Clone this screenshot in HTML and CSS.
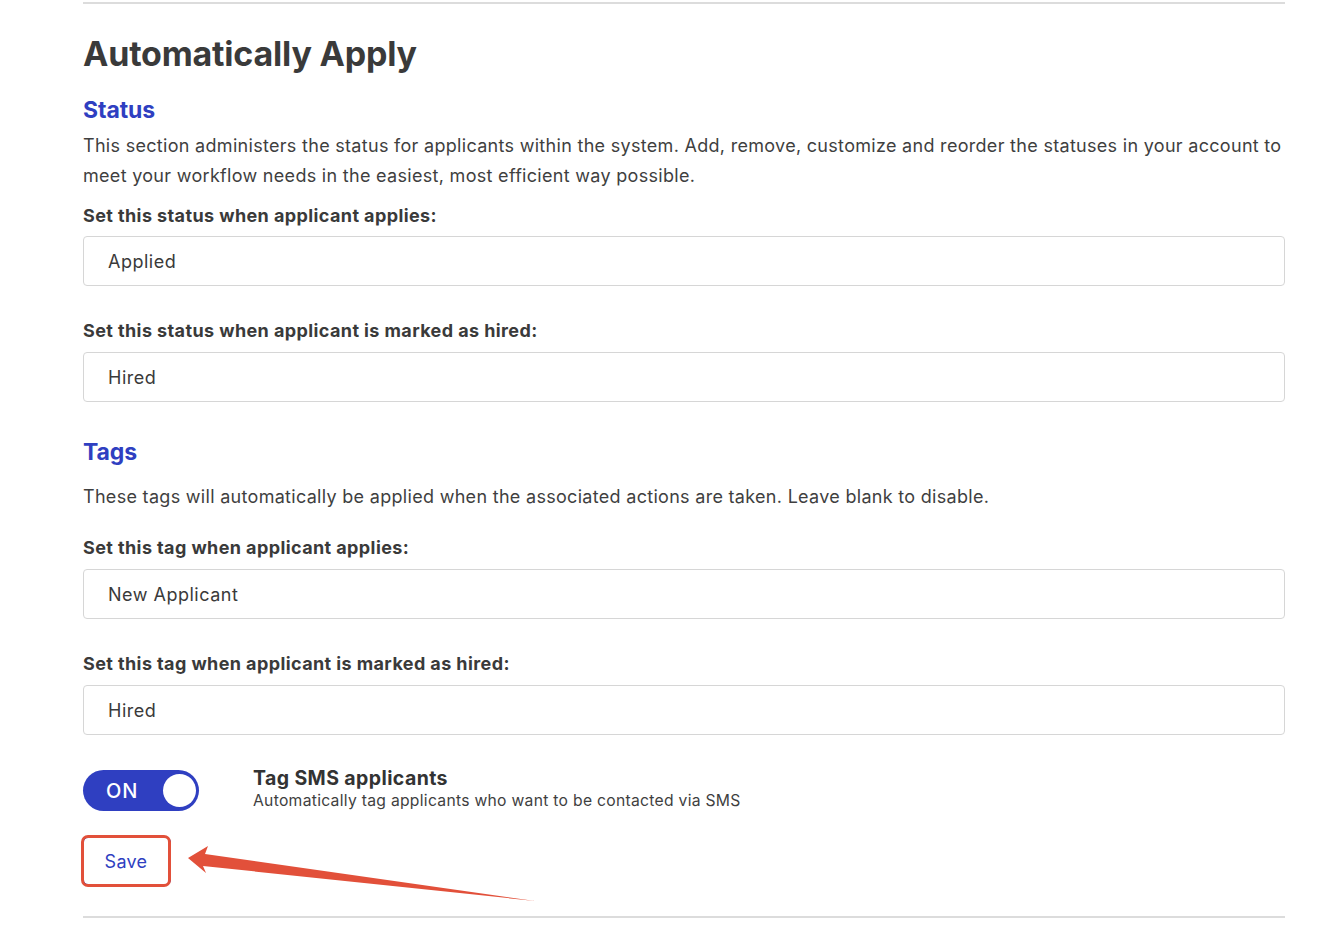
FILE: index.html
```html
<!DOCTYPE html>
<html>
<head>
<meta charset="utf-8">
<link rel="stylesheet" href="styles.css">
</head>
<body>
<div class="page">
  <div class="rule top"></div>
  <h1 class="title">Automatically Apply</h1>

  <h2 class="section">Status</h2>
  <p class="desc">This section administers the status for applicants within the system. Add, remove, customize and reorder the statuses in your account to meet your workflow needs in the easiest, most efficient way possible.</p>
  <div class="label first">Set this status when applicant applies:</div>
  <div class="field f1">Applied</div>
  <div class="label">Set this status when applicant is marked as hired:</div>
  <div class="field">Hired</div>

  <h2 class="section tags">Tags</h2>
  <p class="desc tagdesc">These tags will automatically be applied when the associated actions are taken. Leave blank to disable.</p>
  <div class="label first2">Set this tag when applicant applies:</div>
  <div class="field">New Applicant</div>
  <div class="label">Set this tag when applicant is marked as hired:</div>
  <div class="field">Hired</div>

  <div class="toggle-row">
    <div class="toggle"><span class="on">ON</span><span class="knob"></span></div>
    <div class="toggle-text">
      <div class="toggle-title">Tag SMS applicants</div>
      <div class="toggle-sub">Automatically tag applicants who want to be contacted via SMS</div>
    </div>
  </div>

  <div class="save-wrap">
    <button class="save">Save</button>
    <div class="highlight"></div>
  </div>

  <div class="rule bottom"></div>
</div>
<svg class="arrow" width="1333" height="937" viewBox="0 0 1333 937">
  <polygon points="188,858 208,846 205,854 535,901 203,866 206,873" fill="#e2503a"/>
</svg>
</body>
</html>
```
FILE: styles.css
```css
html, body {
  margin: 0;
  padding: 0;
  background: #fff;
}
body {
  font-family: Inter, "Open Sans", sans-serif;
  color: #3a3a3a;
  position: relative;
  width: 1333px;
  height: 937px;
  overflow: hidden;
}
.page {
  margin-left: 83px;
  width: 1202px;
  display: flex;
  flex-direction: column;
}
.rule {
  border-top: 2px solid #dcdcdc;
  height: 0;
}
.rule.top { margin-top: 2px; }
.rule.bottom { margin-top: 31px; }
.title {
  margin: 28px 0 0 0;
  font-size: 34px;
  line-height: 44px;
  font-weight: 700;
  color: #3a3a3a;
  letter-spacing: -0.2px;
}
.section {
  margin: 19px 0 0 0;
  font-size: 23px;
  line-height: 30px;
  font-weight: 700;
  color: #2f3fc1;
  letter-spacing: -0.1px;
}
.section.tags { margin-top: 35px; }
.desc {
  margin: 6px 0 0 0;
  font-size: 18px;
  line-height: 30px;
  color: #3f3f3f;
  letter-spacing: 0.3px;
}
.desc.tagdesc { margin-top: 15px; }
.label {
  margin-top: 33px;
  font-size: 18px;
  line-height: 24px;
  font-weight: 700;
  color: #3a3a3a;
  letter-spacing: 0.4px;
}
.label.first { margin-top: 13px; }
.label.first2 { margin-top: 24px; }
.field {
  margin-top: 9px;
  height: 48px;
  border: 1px solid #d6d6d6;
  border-radius: 4px;
  padding-left: 24px;
  display: flex;
  align-items: center;
  font-size: 18px;
  color: #3a3a3a;
  letter-spacing: 0.5px;
}
.field.f1 { margin-top: 8px; }
.toggle-row {
  margin-top: 31px;
  display: flex;
  align-items: flex-start;
  gap: 54px;
}
.toggle {
  margin-top: 4px;
  width: 116px;
  height: 41px;
  border-radius: 21px;
  background: #2f3fc1;
  display: flex;
  align-items: center;
  justify-content: space-between;
  padding: 0 3px 0 23px;
  box-sizing: border-box;
}
.on {
  color: #fff;
  font-size: 20px;
  font-weight: 500;
  letter-spacing: 1px;
}
.knob {
  width: 33px;
  height: 33px;
  border-radius: 50%;
  background: #fff;
}
.toggle-text {
  display: flex;
  flex-direction: column;
}
.toggle-title {
  font-size: 19.5px;
  line-height: 24px;
  font-weight: 700;
  color: #333;
  letter-spacing: 0.4px;
}
.toggle-sub {
  font-size: 15.7px;
  line-height: 22px;
  color: #3f3f3f;
  letter-spacing: 0.28px;
}
.save-wrap {
  margin-top: 25px;
  position: relative;
  width: 88px;
  height: 48px;
}
.save {
  width: 88px;
  height: 48px;
  border: 1px solid #2f3fc1;
  border-radius: 5px;
  background: #fff;
  color: #2f3fc1;
  font-family: Inter, "Open Sans", sans-serif;
  font-size: 18px;
  letter-spacing: 0.3px;
  padding: 0 2px 0 0;
}
.highlight {
  position: absolute;
  left: -2px;
  top: -2px;
  width: 84px;
  height: 46px;
  border: 3px solid #e2503a;
  border-radius: 7px;
}
.arrow {
  position: absolute;
  left: 0;
  top: 0;
  pointer-events: none;
}
```
